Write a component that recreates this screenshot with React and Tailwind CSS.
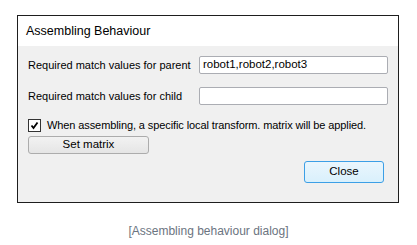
import React from 'react';

// Qt-style "Assembling Behaviour" dialog with caption underneath
function TextField({ value }) {
  return (
    <div className="flex-1 h-[18px] bg-white border border-[#abadb3] rounded-[2px] px-[3px] flex items-center text-[11.5px] text-black">
      {value}
    </div>
  );
}

export default function App() {
  return (
    <div className="w-[417px] h-[245px] bg-white pt-[15px] font-['Liberation_Sans',Arial,sans-serif]">
      <div className="ml-[17px] w-[382px] h-[188px] border border-[#1e1e1e] flex flex-col">
        {/* Title */}
        <div className="h-[30px] bg-white flex items-center pl-[8px] text-[12.5px] text-black">
          Assembling Behaviour
        </div>

        {/* Body */}
        <div className="flex-1 bg-[#f0f0f0] pl-[10px] pr-[10px] pt-[10px] text-[11px] text-black whitespace-nowrap">
          <div className="flex items-center h-[18px]">
            <span className="w-[171px]">Required match values for parent</span>
            <TextField value="robot1,robot2,robot3" />
          </div>
          <div className="flex items-center h-[18px] mt-[13px]">
            <span className="w-[171px]">Required match values for child</span>
            <TextField value="" />
          </div>

          <div className="flex items-center mt-[14px] h-[13px]">
            <div className="w-[13px] h-[13px] bg-white border border-[#333] flex items-center justify-center">
              <svg width="9" height="9" viewBox="0 0 9 9">
                <path d="M1.5 4.5 L3.5 7 L7.5 1.5" stroke="#000" strokeWidth="1.8" fill="none" />
              </svg>
            </div>
            <span className="ml-[6px] tracking-[-0.1px]">When assembling, a specific local transform. matrix will be applied.</span>
          </div>

          <button className="mt-[4px] w-[121px] h-[18px] border border-[#acacac] rounded-[3px] bg-gradient-to-b from-[#f2f2f2] to-[#e5e5e5] text-[11.5px] flex items-center justify-center">
            Set matrix
          </button>

          <div className="flex justify-end mt-[7px] pr-[4px]">
            <button className="w-[80px] h-[22px] border border-[#3c9fe6] rounded-[3px] bg-gradient-to-b from-[#eaf6fd] to-[#d9f0fc] text-[11.5px] flex items-center justify-center">
              Close
            </button>
          </div>
        </div>
      </div>

      <div className="mt-[19px] text-center text-[12px] text-[#6b7480]">
        [Assembling behaviour dialog]
      </div>
    </div>
  );
}
